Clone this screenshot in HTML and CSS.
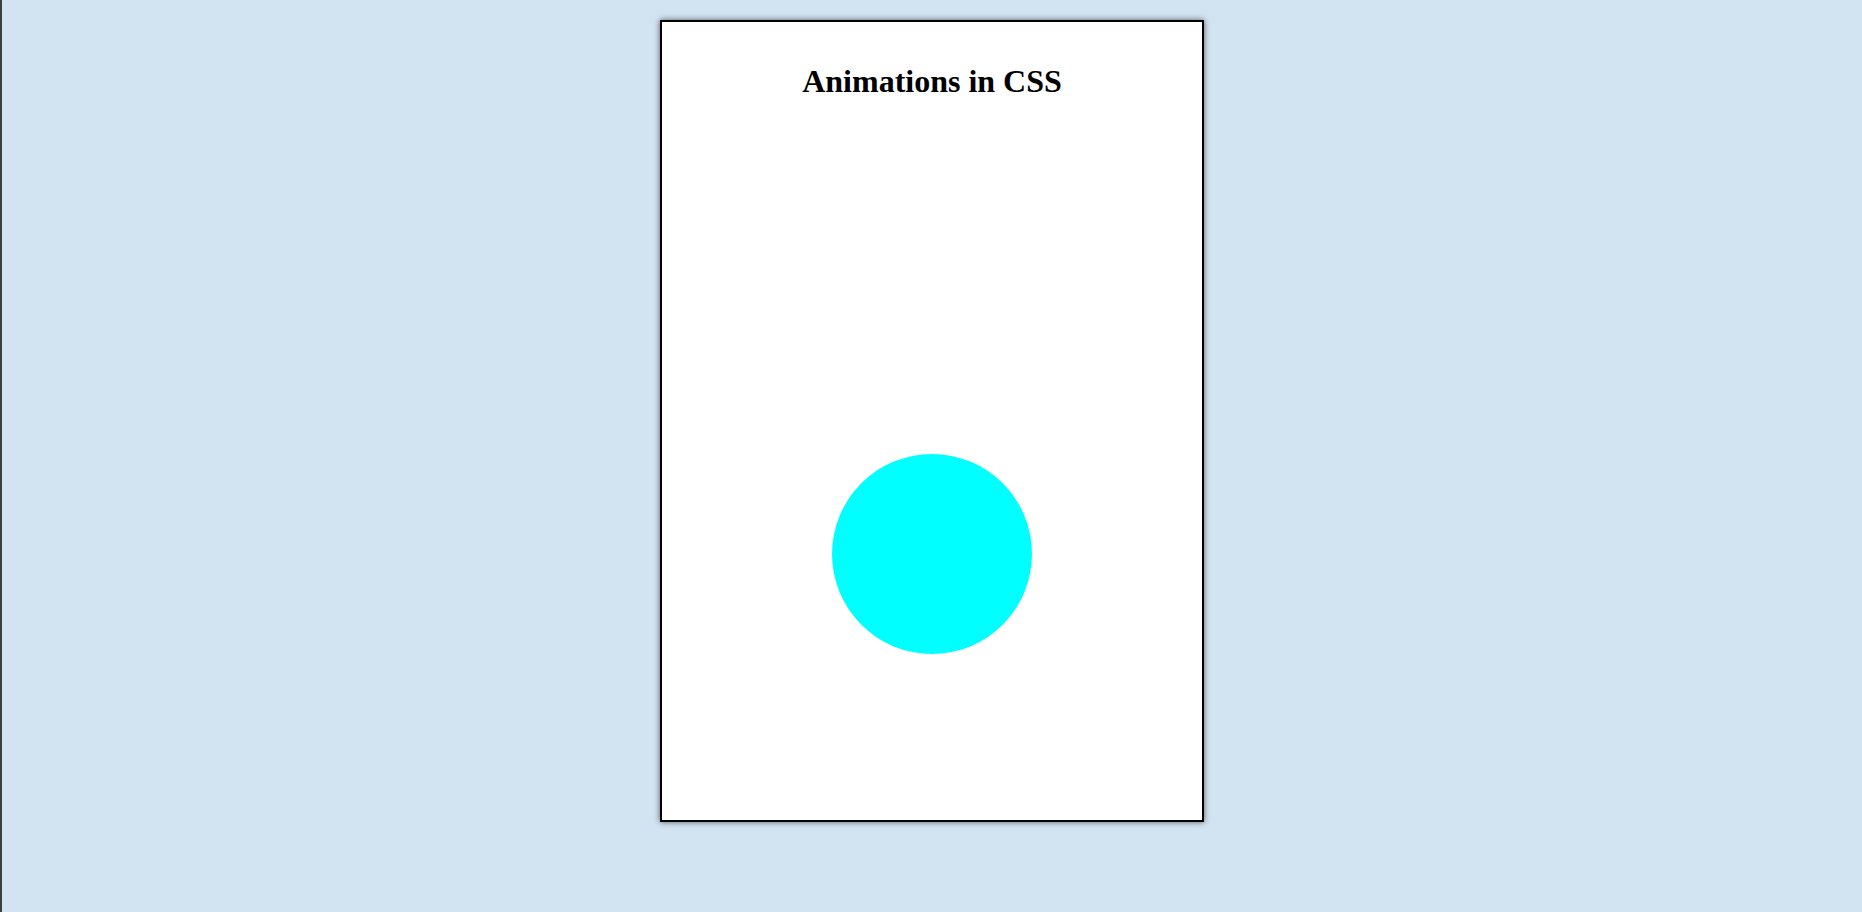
FILE: index.html
```html
<!DOCTYPE html>
<html lang="en">
<head>
<meta charset="utf-8">
<title>Animations in CSS</title>
<link rel="stylesheet" href="styles.css">
</head>
<body>
<div class="page">
  <div class="card">
    <h1 class="title">Animations in CSS</h1>
    <div class="ball"></div>
  </div>
</div>
</body>
</html>
```
FILE: styles.css
```css
html, body {
  margin: 0;
  padding: 0;
  height: 100%;
}
body {
  background: #d2e3f1;
  font-family: "Liberation Serif", "Times New Roman", serif;
}
.page {
  height: 100%;
  box-sizing: border-box;
  border-left: 2px solid #3b3e42;
  display: flex;
  justify-content: center;
  align-items: flex-start;
  padding-top: 20px;
}
.card {
  box-sizing: border-box;
  width: 544px;
  height: 802px;
  background: #ffffff;
  border: 2px solid #000000;
  box-shadow: 0 0 6px rgba(0, 0, 0, 0.6);
  display: flex;
  flex-direction: column;
  align-items: center;
  padding-top: 20px;
}
.title {
  margin: 21px 0 0 0;
  font-size: 32px;
  font-weight: bold;
  line-height: normal;
  color: #000;
}
.ball {
  width: 200px;
  height: 200px;
  border-radius: 50%;
  background: #00ffff;
  margin-top: 354px;
}
```
